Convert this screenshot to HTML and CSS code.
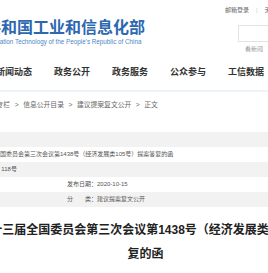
FILE: index.html
```html
<!DOCTYPE html>
<html lang="zh-CN">
<head>
  <meta charset="UTF-8">
  <meta name="viewport" content="width=device-width, initial-scale=1.0">
  <title>建议提案复文公开</title>
  <link rel="stylesheet" href="styles.css">
</head>
<body>

  <!-- Header -->
  <div class="header">
    <div class="logo">
      <div class="logo-cn">中华人民共和国工业和信息化部</div>
      <div class="logo-en">Ministry of Industry and Information Technology of the People's Republic of China</div>
    </div>
    <div class="tools">
      <div class="links">
        <a href="#">邮箱登录</a><span class="sep">|</span><a href="#">无障碍</a>
      </div>
      <div class="search"></div>
      <div class="hot">看新闻</div>
    </div>
  </div>

  <!-- Main Navigation -->
  <div class="nav">
    <a href="#">新闻动态</a>
    <a href="#">政务公开</a>
    <a href="#">政务服务</a>
    <a href="#">公众参与</a>
    <a href="#">工信数据</a>
    <a href="#">专题专栏</a>
  </div>

  <!-- Breadcrumb -->
  <div class="crumb">
    <a href="#">首页</a><span class="arrow">&gt;</span><a href="#">专栏</a><span class="arrow">&gt;</span><a href="#">信息公开目录</a><span class="arrow">&gt;</span><a href="#">建议提案复文公开</a><span class="arrow">&gt;</span><span>正文</span>
  </div>

  <!-- Document Info -->
  <table class="info">
    <colgroup>
      <col class="col-left">
      <col>
    </colgroup>
    <tr>
      <td>发文机关：工业和信息化部</td>
      <td></td>
    </tr>
    <tr>
      <td colspan="2">标　　题：关于政协十三届全国委员会第三次会议第1438号（经济发展类105号）提案答复的函</td>
    </tr>
    <tr>
      <td colspan="2">文　　号：工信建议〔2020〕118号</td>
    </tr>
    <tr>
      <td>成文日期：2020-10-14</td>
      <td>发布日期：2020-10-15</td>
    </tr>
    <tr>
      <td>主题分类：其他</td>
      <td>分　　类：建议提案复文公开</td>
    </tr>
  </table>

  <!-- Article Title -->
  <h1 class="title">关于政协十三届全国委员会第三次会议第1438号（经济发展类105号）提案答<br>复的函</h1>

</body>
</html>
```

FILE: styles.css
```css
body {
  font-family: "Liberation Sans", "Noto Sans CJK SC", sans-serif;
  background-color: white;
  color: #333;
  margin: 0;
  padding: 0;
  overflow: hidden;
}
a {
  color: inherit;
  text-decoration: none;
}
/* Header */
.header {
  display: flex;
  height: 60px;
}
.logo {
  flex: none;
  width: 304px;
  margin-left: -79px;
  padding-top: 19px;
  white-space: nowrap;
}
.logo-cn {
  font-size: 16px;
  line-height: 18px;
  font-weight: bold;
  color: #2d68b0;
}
.logo-en {
  font-size: 6.3px;
  line-height: 8px;
  color: #4b87c6;
  margin-top: 1px;
  margin-left: -6px;
}
.tools {
  flex: none;
  width: 140px;
}
.links {
  font-size: 6px;
  line-height: 8px;
  color: #666;
  padding-top: 5.5px;
  white-space: nowrap;
}
.links .sep {
  color: #ccc;
  margin: 0 7px;
}
.search {
  width: 110px;
  height: 15px;
  margin: 11.5px 0 0 13px;
  border: 1px solid #e2e2e2;
}
.hot {
  font-size: 6px;
  line-height: 8px;
  color: #999;
  margin: 2.5px 0 0 20px;
}
/* Navigation */
.nav {
  display: flex;
  gap: 22px;
  margin-left: -4px;
  padding: 6px 0 12px;
  border-bottom: 2px solid #eef3f9;
  white-space: nowrap;
}
.nav a {
  font-size: 9px;
  line-height: 12px;
  font-weight: bold;
  color: #333;
}
/* Breadcrumb */
.crumb {
  font-size: 6.8px;
  line-height: 9px;
  color: #666;
  margin: 8px 0 0 -30px;
  white-space: nowrap;
}
.crumb .arrow {
  margin: 0 4.5px;
}
/* Info table */
.info {
  width: 400px;
  margin: 23px 0 0 -84px;
  border-collapse: collapse;
  table-layout: fixed;
  font-size: 6px;
  color: #555;
}
.info .col-left {
  width: 145px;
}
.info td {
  height: 15px;
  padding: 0 0 0 6px;
  line-height: 15px;
  white-space: nowrap;
  overflow: hidden;
}
.info tr:nth-child(odd) {
  background-color: #f2f2f2;
}
/* Title */
.title {
  width: 430px;
  margin: 11px 0 0 -69.5px;
  font-size: 12px;
  line-height: 24px;
  font-weight: bold;
  text-align: center;
  color: #222;
}
```
